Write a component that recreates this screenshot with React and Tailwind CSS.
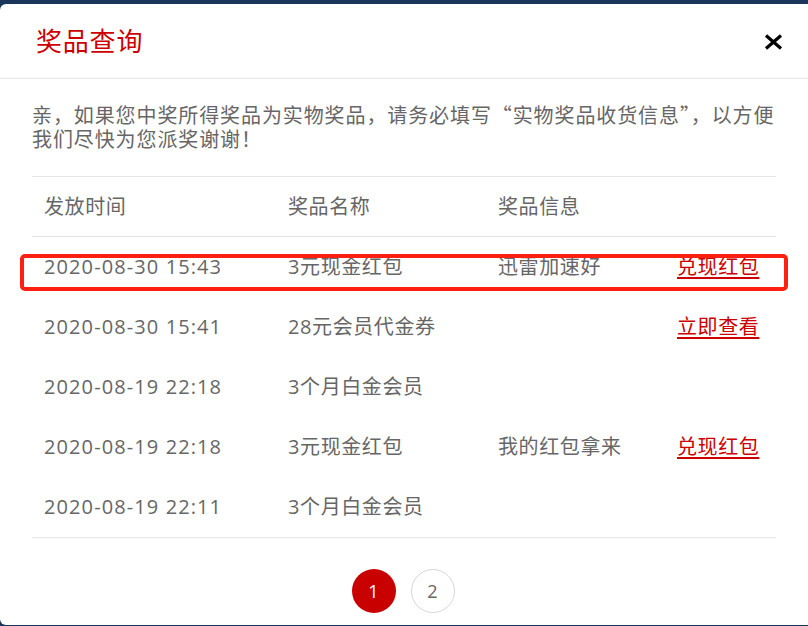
const rows = [
  { time: "2020-08-30 15:43", name: "3元现金红包", info: "迅雷加速好", link: "兑现红包", mark: true },
  { time: "2020-08-30 15:41", name: "28元会员代金券", info: "", link: "立即查看" },
  { time: "2020-08-19 22:18", name: "3个月白金会员", info: "", link: "" },
  { time: "2020-08-19 22:18", name: "3元现金红包", info: "我的红包拿来", link: "兑现红包" },
  { time: "2020-08-19 22:11", name: "3个月白金会员", info: "", link: "" },
];

const font = { fontFamily: '"Open Sans", "Noto Sans CJK SC", sans-serif' };
const cjk = { fontFamily: '"Noto Sans CJK SC", sans-serif' };

export default function App() {
  return (
    <div className="h-[626px] overflow-hidden bg-[#1b365a] pt-[4px]" style={font}>
      <div className="flex h-[621px] flex-col rounded-l-[6px] bg-white">
        <div className="flex h-[75px] shrink-0 items-center justify-between border-b border-[#e5e5e5] pl-[36px] pr-[25px]">
          <h1 className="text-[26px] leading-none tracking-[0.8px] text-[#cc0000]">奖品查询</h1>
          <svg width="19" height="16" viewBox="0 0 19 16" className="mt-[1px]">
            <path d="M2 1.5 L17 14.5 M17 1.5 L2 14.5" stroke="#000" strokeWidth="3.2" strokeLinecap="butt" />
          </svg>
        </div>

        <div className="px-[32px]">
          <p className="mt-[24px] text-[20px] leading-[24px] tracking-[0.9px] text-[#666]" style={cjk}>
            亲，如果您中奖所得奖品为实物奖品，请务必填写“实物奖品收货信息”，以方便
            <br />
            我们尽快为您派奖谢谢！
          </p>

          <div className="mt-[25px] border-y border-[#e5e5e5] text-[20px] tracking-[0.6px] text-[#666]">
            <div className="grid h-[60px] grid-cols-[244px_210px_179px_111px] items-center border-b border-[#e5e5e5]">
              <div className="pl-[12px]">发放时间</div>
              <div className="pl-[12px]">奖品名称</div>
              <div className="pl-[12px]">奖品信息</div>
              <div />
            </div>
            {rows.map((r, i) => (
              <div key={i} className="relative grid h-[60px] grid-cols-[244px_210px_179px_111px] items-center">
                <div className="pl-[12px] tracking-[1.1px]">{r.time}</div>
                <div className="pl-[12px]">{r.name}</div>
                <div className="pl-[12px]">{r.info}</div>
                <div className="pl-[12px]">
                  {r.link && (
                    <a href="#" className="text-[#cc0000] underline underline-offset-[3px]">
                      {r.link}
                    </a>
                  )}
                </div>
                {r.mark && (
                  <div className="pointer-events-none absolute -left-[12px] -right-[12px] top-[17px] h-[37px] rounded-[5px] border-[4px] border-[#ff2011]" />
                )}
              </div>
            ))}
          </div>

          <div className="mt-[31px] flex justify-center gap-[15px] pr-[2px]">
            <button className="flex h-[44px] w-[44px] items-center justify-center rounded-full bg-[#c80000] text-[18px] text-white">
              1
            </button>
            <button className="flex h-[44px] w-[44px] items-center justify-center rounded-full border border-[#d6d6d6] bg-white text-[18px] text-[#666]">
              2
            </button>
          </div>
        </div>
      </div>
    </div>
  );
}
